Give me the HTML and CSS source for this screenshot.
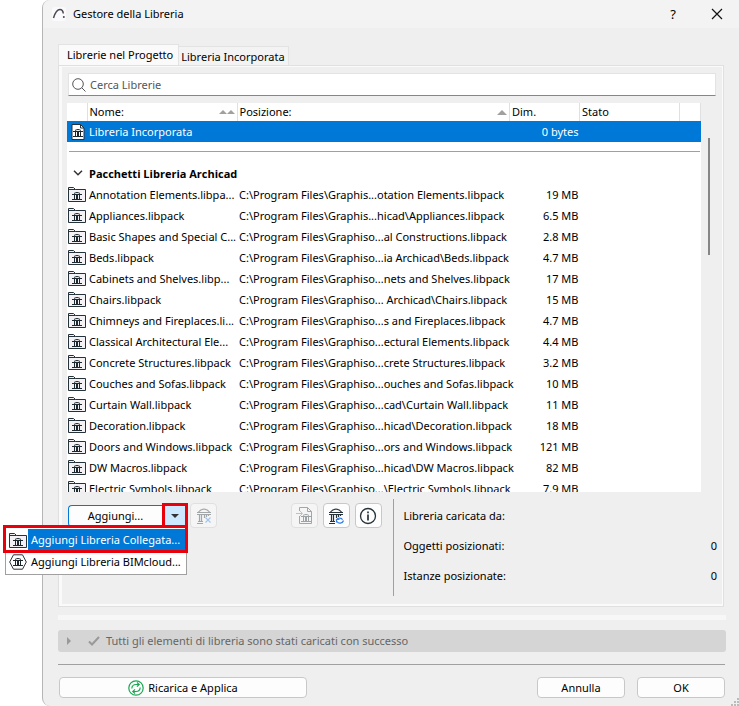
FILE: index.html
```html
<!DOCTYPE html>
<html lang="it">
<head>
  <meta charset="UTF-8">
  <meta name="viewport" content="width=device-width, initial-scale=1.0">
  <title>Gestore della Libreria</title>
  <link rel="stylesheet" href="styles.css">
</head>
<body>
  <!-- Iconos compartidos -->
  <svg class="sprite" width="0" height="0" aria-hidden="true">
    <symbol id="temple" viewBox="0 0 10 8">
      <path d="M0 2.500h10M2 1.500C3 .8 4 .5 5 .5s2 .3 3 1M2.500 3v4M4.500 3v4M5.500 3v4M7.500 3v4M0 7.500h10" fill="none" stroke="#1c272e" stroke-width="1"/>
    </symbol>
    <symbol id="folder" viewBox="0 0 18 16">
      <path d="M.5 15.500V1.500h5l2 2h10v12z" fill="#f4f2f5" stroke="#26323a"/>
      <path d="M.5 3.500h7" stroke="#26323a"/>
      <use href="#temple" x="4" y="6" width="10" height="8"/>
    </symbol>
    <symbol id="page" viewBox="0 0 14 16">
      <path d="M1 .5h8.500l3.500 3.500v11.500H1z" fill="#fff" stroke="#26323a"/>
      <path d="M9.500.5V4H13" fill="none" stroke="#26323a"/>
      <use href="#temple" x="2" y="5" width="10" height="8"/>
    </symbol>
    <symbol id="hexagon" viewBox="0 0 18 16">
      <path d="M4.500.8h9L17.300 8l-3.800 7.200h-9L.7 8z" fill="#fff" stroke="#26323a"/>
      <use href="#temple" x="4" y="4" width="10" height="8"/>
    </symbol>
    <symbol id="pavilion" viewBox="0 0 16 16">
      <path d="M1 4.500h14M2.500 4C4 2 6 1.300 8 1c2 .3 4 1 5.500 3M1 6.500h14M3.500 7v6M5.500 7v6M8.500 7v3M10.500 7v2M12.500 7v1M2 13.500h5M1 15.500h6" fill="none" stroke="#26323a" stroke-width="1.200"/>
    </symbol>
  </svg>

  <main class="dialog">
    <header class="titlebar">
      <svg class="logo" width="14" height="14" viewBox="0 0 14 14">
        <rect width="14" height="14" rx="2" fill="#fafafc"/>
        <path d="M1.500 11C3 6 5.500 2.500 8 2.500c2 0 3 1.500 3.300 4" fill="none" stroke="#4a4a55" stroke-width="1.500"/>
        <circle cx="11.800" cy="10" r="1" fill="#4a4a55"/>
      </svg>
      <h1>Gestore della Libreria</h1>
      <button type="button" class="title-btn" aria-label="Guida">?</button>
      <button type="button" class="title-btn" aria-label="Chiudi">
        <svg width="12" height="12" viewBox="0 0 12 12"><path d="M1 1l10 10M11 1L1 11" stroke="#111" stroke-width="1.200"/></svg>
      </button>
    </header>

    <div class="content">
      <nav class="tabs">
        <button type="button" class="tab active">Librerie nel Progetto</button>
        <button type="button" class="tab">Libreria Incorporata</button>
      </nav>

      <section class="panel">
        <div class="search">
          <svg width="14" height="14" viewBox="0 0 14 14"><circle cx="6" cy="6" r="5.300" fill="none" stroke="#555"/><path d="M9.800 9.800l3.700 3.700" stroke="#555"/></svg>
          <input type="text" aria-label="Cerca Librerie" placeholder="Cerca Librerie">
        </div>

        <div class="list">
          <div class="table-wrap">
            <table>
              <colgroup>
                <col class="col-icon"><col class="col-name"><col><col class="col-size"><col class="col-state"><col class="col-end">
              </colgroup>
              <thead>
                <tr>
                  <th></th>
                  <th><span class="head">Nome: <i class="sort small"></i><i class="sort small"></i></span></th>
                  <th><span class="head">Posizione: <i class="sort"></i></span></th>
                  <th>Dim.</th>
                  <th>Stato</th>
                  <th></th>
                </tr>
              </thead>
              <tbody>
                <tr class="selected"><td><svg class="page" width="14" height="16"><use href="#page"/></svg></td><td>Libreria Incorporata</td><td></td><td>0 bytes</td><td></td><td></td></tr>
                <tr class="divider"><td colspan="6"><hr></td></tr>
                <tr class="group"><td><svg class="chevron" width="10" height="6" viewBox="0 0 10 6"><path d="M1 .7l4 4 4-4" fill="none" stroke="#333" stroke-width="1.500"/></svg></td><td colspan="5">Pacchetti Libreria Archicad</td></tr>
                <tr><td><svg width="18" height="16"><use href="#folder"/></svg></td><td>Annotation Elements.libpa...</td><td>C:\Program Files\Graphis...otation Elements.libpack</td><td>19 MB</td><td></td><td></td></tr>
                <tr><td><svg width="18" height="16"><use href="#folder"/></svg></td><td>Appliances.libpack</td><td>C:\Program Files\Graphis...hicad\Appliances.libpack</td><td>6.5 MB</td><td></td><td></td></tr>
                <tr><td><svg width="18" height="16"><use href="#folder"/></svg></td><td>Basic Shapes and Special C...</td><td>C:\Program Files\Graphiso...al Constructions.libpack</td><td>2.8 MB</td><td></td><td></td></tr>
                <tr><td><svg width="18" height="16"><use href="#folder"/></svg></td><td>Beds.libpack</td><td>C:\Program Files\Graphiso...ia Archicad\Beds.libpack</td><td>4.7 MB</td><td></td><td></td></tr>
                <tr><td><svg width="18" height="16"><use href="#folder"/></svg></td><td>Cabinets and Shelves.libp...</td><td>C:\Program Files\Graphiso...nets and Shelves.libpack</td><td>17 MB</td><td></td><td></td></tr>
                <tr><td><svg width="18" height="16"><use href="#folder"/></svg></td><td>Chairs.libpack</td><td>C:\Program Files\Graphiso... Archicad\Chairs.libpack</td><td>15 MB</td><td></td><td></td></tr>
                <tr><td><svg width="18" height="16"><use href="#folder"/></svg></td><td>Chimneys and Fireplaces.li...</td><td>C:\Program Files\Graphiso...s and Fireplaces.libpack</td><td>4.7 MB</td><td></td><td></td></tr>
                <tr><td><svg width="18" height="16"><use href="#folder"/></svg></td><td>Classical Architectural Ele...</td><td>C:\Program Files\Graphiso...ectural Elements.libpack</td><td>4.4 MB</td><td></td><td></td></tr>
                <tr><td><svg width="18" height="16"><use href="#folder"/></svg></td><td>Concrete Structures.libpack</td><td>C:\Program Files\Graphiso...crete Structures.libpack</td><td>3.2 MB</td><td></td><td></td></tr>
                <tr><td><svg width="18" height="16"><use href="#folder"/></svg></td><td>Couches and Sofas.libpack</td><td>C:\Program Files\Graphiso...ouches and Sofas.libpack</td><td>10 MB</td><td></td><td></td></tr>
                <tr><td><svg width="18" height="16"><use href="#folder"/></svg></td><td>Curtain Wall.libpack</td><td>C:\Program Files\Graphiso...cad\Curtain Wall.libpack</td><td>11 MB</td><td></td><td></td></tr>
                <tr><td><svg width="18" height="16"><use href="#folder"/></svg></td><td>Decoration.libpack</td><td>C:\Program Files\Graphiso...hicad\Decoration.libpack</td><td>18 MB</td><td></td><td></td></tr>
                <tr><td><svg width="18" height="16"><use href="#folder"/></svg></td><td>Doors and Windows.libpack</td><td>C:\Program Files\Graphiso...ors and Windows.libpack</td><td>121 MB</td><td></td><td></td></tr>
                <tr><td><svg width="18" height="16"><use href="#folder"/></svg></td><td>DW Macros.libpack</td><td>C:\Program Files\Graphiso...hicad\DW Macros.libpack</td><td>82 MB</td><td></td><td></td></tr>
                <tr><td><svg width="18" height="16"><use href="#folder"/></svg></td><td>Electric Symbols.libpack</td><td>C:\Program Files\Graphiso...\Electric Symbols.libpack</td><td>7.9 MB</td><td></td><td></td></tr>
              </tbody>
            </table>
          </div>
          <div class="scrollbar"><div class="thumb"></div></div>
        </div>

        <div class="bottom">
          <div class="tools">
            <div class="split">
              <button type="button" class="add">Aggiungi...</button>
              <button type="button" class="arrow" aria-label="Apri menu"><i class="down"></i></button>
              <div class="menu">
                <button type="button" class="menu-item current"><span class="menu-icon"><svg width="18" height="16"><use href="#folder"/></svg></span>Aggiungi Libreria Collegata...</button>
                <button type="button" class="menu-item"><span class="menu-icon"><svg width="18" height="16"><use href="#hexagon"/></svg></span>Aggiungi Libreria BIMcloud...</button>
              </div>
              <div class="mark mark-arrow"></div>
              <div class="mark mark-item"></div>
            </div>
            <button type="button" class="tool" disabled aria-label="Rimuovi">
              <svg width="16" height="16" viewBox="0 0 16 16"><use href="#pavilion"/><path d="M9.500 9.500l5 5M14.500 9.500l-5 5" stroke="#2f7fe8" stroke-width="1.200"/></svg>
            </button>
            <button type="button" class="tool push" disabled aria-label="Incorpora">
              <svg width="17" height="17" viewBox="0 0 17 17"><path d="M3.500 4V.5h8l4 4v12h-12V9M11.500.5v4h4" fill="none" stroke="#26323a"/><path d="M0 6.500h6M4 4l2.500 2.500L4 9" fill="none" stroke="#2f7fe8"/><use href="#temple" x="5" y="7" width="10" height="8"/></svg>
            </button>
            <button type="button" class="tool" aria-label="Ricarica libreria">
              <svg width="16" height="16" viewBox="0 0 16 16"><use href="#pavilion"/><path d="M8.500 14.500v-3h3M8.700 11.500c1-2 5-2 5.800.3M15.500 12.500c-1 3-5 3.500-6.500 1" fill="none" stroke="#2f7fe8" stroke-width="1.200"/></svg>
            </button>
            <button type="button" class="tool" aria-label="Informazioni">
              <svg width="18" height="18" viewBox="0 0 18 18"><circle cx="9" cy="9" r="7.500" fill="none" stroke="#26323a" stroke-width="1.300"/><path d="M9 7.500v6M9 4.500v1.700" stroke="#26323a" stroke-width="1.700"/></svg>
            </button>
          </div>
          <dl class="info">
            <div><dt>Libreria caricata da:</dt><dd></dd></div>
            <div><dt>Oggetti posizionati:</dt><dd>0</dd></div>
            <div><dt>Istanze posizionate:</dt><dd>0</dd></div>
          </dl>
        </div>
      </section>

      <div class="strip"></div>

      <div class="status">
        <i class="right"></i>
        <svg width="12" height="10" viewBox="0 0 12 10"><path d="M1 5.500L4 8.500 11 1" fill="none" stroke="#999" stroke-width="2"/></svg>
        Tutti gli elementi di libreria sono stati caricati con successo
      </div>

      <footer class="actions">
        <button type="button" class="btn reload">
          <svg width="16" height="16" viewBox="0 0 16 16" fill="none" stroke="#18a852" stroke-width="1.200"><circle cx="8" cy="8" r="7.200"/><path d="M3.800 8.500C4 5.500 6 4.500 8 4.500h3M9 2.500l2.200 2L9 6.700M12.200 7.500c-.2 3-2.200 4-4.200 4H5M7 9.300l-2.200 2.200 2.200 2"/></svg>
          Ricarica e Applica
        </button>
        <button type="button" class="btn">Annulla</button>
        <button type="button" class="btn">OK</button>
      </footer>
    </div>
    <svg class="grip" width="9" height="9" viewBox="0 0 9 9" fill="#bbb"><path d="M7 1h2v2H7zM4 4h2v2H4zM7 4h2v2H7zM1 7h2v2H1zM4 7h2v2H4zM7 7h2v2H7z"/></svg>
  </main>
</body>
</html>
```
FILE: styles.css
```css
* {
  margin: 0;
  padding: 0;
  box-sizing: border-box;
}
body {
  font-family: "Noto Sans", "Open Sans", sans-serif;
  font-size: 11px;
  line-height: 16px;
  color: #000;
  background-color: #fff;
}
button, input {
  font: inherit;
  color: inherit;
}
svg {
  flex: none;
}
.sprite {
  position: absolute;
}
.dialog {
  position: relative;
  display: flex;
  flex-direction: column;
  height: 100vh;
  margin-left: 42px;
  border-left: 1px solid #b5b5b5;
  border-radius: 8px 0 0 8px;
  background-color: #efefef;
}

/* Barra de título */
.titlebar {
  display: flex;
  align-items: center;
  height: 28px;
  padding-left: 9px;
  border-radius: 8px 0 0 0;
  background-color: #f3f3f3;
}
.titlebar h1 {
  flex: 1;
  margin-left: 7px;
  font-size: 11px;
  font-weight: normal;
}
.title-btn {
  display: flex;
  align-items: center;
  justify-content: center;
  width: 44px;
  height: 28px;
  border: none;
  background: none;
  font-size: 13px;
}
.content {
  display: flex;
  flex: 1;
  flex-direction: column;
  min-height: 0;
  padding: 16px 13px 8px 15px;
}

/* Pestañas */
.tabs {
  display: flex;
  align-items: flex-end;
}
.tab {
  height: 19px;
  padding: 2px 3px 0 2px;
  border: 1px solid #e3e3e3;
  border-width: 1px 1px 0 0;
  background-color: #f3f3f3;
}
.tab.active {
  height: 21px;
  padding: 0 5px 0 8px;
  border-left-width: 1px;
  background-color: #fafafa;
}
.panel {
  display: flex;
  flex: 1;
  flex-direction: column;
  min-height: 0;
  margin-right: 2px;
  padding: 7px 7px 10px 8px;
  border: 1px solid #e0e0e0;
  box-shadow: inset 3px -2px 0 #fafafa, inset -1px 1px 0 #fafafa;
}
.search {
  display: flex;
  align-items: center;
  gap: 4px;
  height: 23px;
  margin-left: 1px;
  padding-left: 3px;
  border: 1px solid #e3e3e3;
  border-bottom-color: #868686;
  background-color: #fff;
}
.search input {
  flex: 1;
  border: none;
  outline: none;
}
.search input::placeholder {
  color: #555;
}

/* Lista de librerías */
.list {
  display: flex;
  flex: 1;
  min-height: 0;
  margin-top: 7px;
}
.table-wrap {
  flex: 1;
  overflow: hidden;
  background-color: #fff;
}
table {
  width: 100%;
  table-layout: fixed;
  border-collapse: collapse;
}
.col-icon {
  width: 20px;
}
.col-name {
  width: 150px;
}
.col-size {
  width: 70px;
}
.col-state {
  width: 100px;
}
.col-end {
  width: 21px;
}
th {
  height: 18px;
  padding: 0 2px;
  border-right: 1px solid #e0e0e0;
  font-weight: normal;
  text-align: left;
  white-space: nowrap;
}
.head {
  display: flex;
  align-items: center;
}
.sort {
  margin-left: auto;
  border: 5px solid transparent;
  border-top: none;
  border-bottom-color: #a0a0a0;
}
.sort.small {
  border-width: 0 4px 4px;
}
.sort.small + .small {
  margin-left: 0;
}
td {
  height: 21px;
  padding: 0 2px;
  white-space: nowrap;
}
td:first-child {
  padding: 0 0 2px 1px;
}
td:nth-child(4) {
  padding-right: 1px;
  text-align: right;
}
td svg {
  display: block;
}
.selected {
  background-color: #0078d7;
  color: #fff;
}
.selected td:first-child {
  padding-bottom: 0;
}
.page {
  margin-left: 3px;
}
.divider hr {
  margin: 0 1px;
  border: none;
  border-top: 1px solid #a0a0a0;
}
.group {
  font-family: "Open Sans", "Noto Sans", sans-serif;
  font-weight: 700;
}
.chevron {
  margin-left: 5px;
}
.scrollbar {
  width: 15px;
  padding: 35px 5px 0 7px;
}
.thumb {
  width: 2px;
  height: 117px;
  background-color: #868686;
}

/* Zona inferior del panel */
.bottom {
  display: flex;
  margin-top: 7px;
}
.tools {
  display: flex;
  flex: 1;
  align-items: flex-start;
  gap: 5px;
  padding: 4px 11px 0 1px;
}
.split {
  position: relative;
  display: flex;
  width: 119px;
  height: 22px;
  margin: 2px -2px 0 0;
}
.add {
  flex: 1;
  border: 1px solid #0078d7;
  border-right: none;
  border-radius: 4px 0 0 4px;
  background-color: #fdfdfd;
}
.arrow {
  display: flex;
  align-items: center;
  justify-content: center;
  width: 25px;
  border: none;
  background-color: #cce8ff;
}
.down {
  border: 4px solid transparent;
  border-top-color: #333;
  border-bottom: none;
}
.menu {
  position: absolute;
  top: 22px;
  left: -63px;
  width: 182px;
  padding: 1px 1px 1px;
  border: 1px solid #a0a0a0;
  background-color: #fff;
}
.menu-item {
  display: flex;
  align-items: center;
  width: 100%;
  height: 22px;
  border: none;
  background: none;
  white-space: nowrap;
}
.menu-item.current {
  background-color: #0078d7;
  color: #fff;
}
.menu-icon {
  display: flex;
  align-items: center;
  height: 22px;
  margin-right: 3px;
  padding: 0 1px 0 2px;
  background-color: #fff;
}
.mark {
  position: absolute;
  border: 3px solid #e8000b;
}
.mark-arrow {
  top: -2px;
  left: 94px;
  width: 26px;
  height: 25px;
}
.mark-item {
  top: 20px;
  left: -65px;
  width: 185px;
  height: 28px;
}
.tool {
  display: flex;
  align-items: center;
  justify-content: center;
  width: 27px;
  height: 25px;
  border: 1px solid #c8c8c8;
  border-radius: 4px;
  background-color: #fdfdfd;
}
.tool:disabled {
  border-color: #e0e0e0;
  background-color: #f5f5f5;
}
.tool:disabled svg {
  opacity: 0.4;
}
.push {
  margin-left: auto;
}
.info {
  width: 50%;
  margin-right: -1px;
  padding: 2px 0 5px 10px;
  border-left: 1px solid #a0a0a0;
}
.info div {
  display: flex;
  justify-content: space-between;
  height: 30px;
  padding-top: 7px;
}

/* Estado y acciones */
.strip {
  height: 5px;
  margin-top: 8px;
  background-color: #f7f7f7;
}
.status {
  display: flex;
  align-items: center;
  gap: 6px;
  height: 22px;
  margin-top: 10px;
  padding-left: 9px;
  border-radius: 3px;
  background-color: #d5d5d5;
  color: #666;
}
.right {
  margin-right: 11px;
  border: 4px solid transparent;
  border-left-color: #999;
  border-right: none;
}
.actions {
  display: flex;
  gap: 12px;
  margin: 12px 1px 0 0;
  padding: 12px 0 0 1px;
  border-top: 1px solid #a0a0a0;
}
.btn {
  display: flex;
  align-items: center;
  justify-content: center;
  gap: 4px;
  width: 88px;
  height: 21px;
  border: 1px solid #c8c8c8;
  border-radius: 4px;
  background-color: #fdfdfd;
}
.reload {
  width: 248px;
  margin-right: auto;
}
.grip {
  position: absolute;
  right: 0;
  bottom: 0;
}
```
